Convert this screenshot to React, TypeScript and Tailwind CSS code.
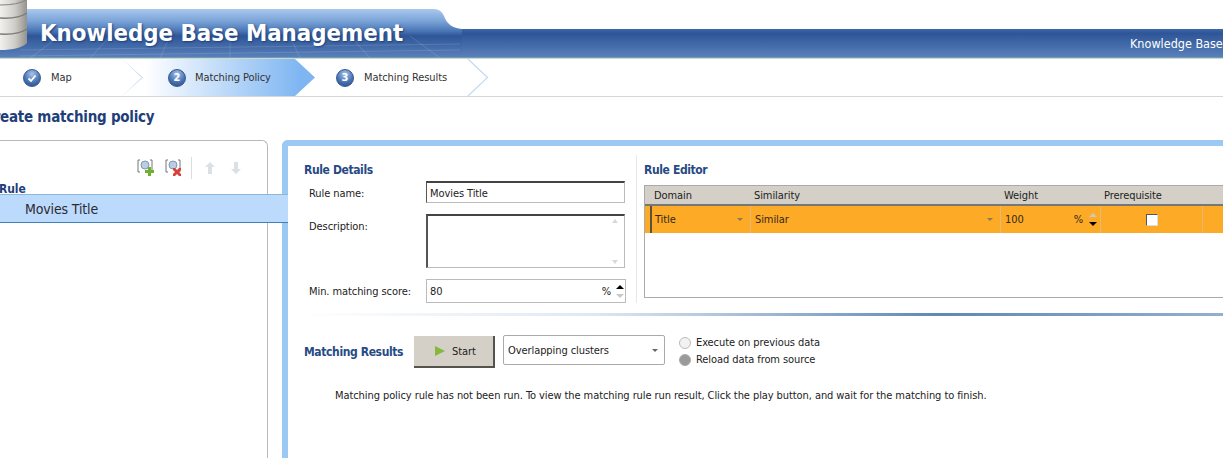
import React from "react";

const Chevron = ({ className }: { className: string }) => (
  <svg className={className} width="22" height="37" viewBox="0 0 22 37" fill="none">
    <path d="M1 0 L20.5 18.5 L1 37" stroke="#c4d9f3" strokeWidth="1.2" />
  </svg>
);

const StepBall = ({ children }: { children: React.ReactNode }) => (
  <span className="flex h-[18px] w-[18px] shrink-0 items-center justify-center rounded-full border border-[#34598f] bg-[radial-gradient(circle_at_50%_25%,#a9c3e8,#4b76b5_55%,#21467f)] text-[11px] font-bold leading-none text-white">
    {children}
  </span>
);

const Banner = () => (
  <div className="relative h-[59px] w-full overflow-hidden">
    {/* tab + bar shape, with the faint grid on it */}
    <svg className="absolute left-0 top-0" width="1223" height="59" viewBox="0 0 1223 59">
      <defs>
        <linearGradient id="bar" gradientUnits="userSpaceOnUse" x1="0" y1="29" x2="0" y2="58">
          <stop offset="0" stopColor="#3d68aa" />
          <stop offset="0.15" stopColor="#2e5597" />
          <stop offset="1" stopColor="#5b82bb" />
        </linearGradient>
        <linearGradient id="tab" gradientUnits="userSpaceOnUse" x1="0" y1="9" x2="0" y2="58">
          <stop offset="0" stopColor="#a9c8ec" />
          <stop offset="0.25" stopColor="#7aa3d8" />
          <stop offset="0.45" stopColor="#4a75b4" />
          <stop offset="0.55" stopColor="#2e5597" />
          <stop offset="1" stopColor="#5b82bb" />
        </linearGradient>
      </defs>
      <path d="M0 29H1223V58H0Z" fill="url(#bar)" />
      <path d="M0 9H434Q441 9 444 16Q448 28 462 29V58H0Z" fill="url(#tab)" />
      <g stroke="#ffffff" strokeOpacity="0.13" strokeWidth="1" fill="none">
        <path d="M20 50L460 44M20 56L460 50M60 36L30 58M110 36L90 58M170 36L160 58M230 36L230 58M290 36L300 58M350 36L370 58M410 36L440 58" />
      </g>
      <path d="M0 58H1223" stroke="#8fb5a8" strokeWidth="1" />
    </svg>
    {/* database drum */}
    <svg className="absolute left-0 top-0" width="28" height="52" viewBox="0 0 28 52">
      <defs>
        <linearGradient id="drum" x1="0" y1="0" x2="1" y2="0">
          <stop offset="0" stopColor="#f2f1ee" />
          <stop offset="0.55" stopColor="#cfcdc8" />
          <stop offset="1" stopColor="#94928d" />
        </linearGradient>
      </defs>
      <path d="M0 0H27V43Q20 50 0 50Z" fill="url(#drum)" />
      <path d="M0 18Q18 19 27 13M0 34Q18 35 27 29" stroke="#7d7c78" strokeWidth="1.5" fill="none" />
      <path d="M0 5Q18 5 26 0" stroke="#85847f" strokeWidth="1" fill="none" />
    </svg>
    <div className="relative flex h-full items-start justify-between pl-[40px]">
      <h1 className="mt-[17px] whitespace-nowrap text-[23.75px] font-bold leading-[32px] tracking-normal text-white [text-shadow:1px_1px_2px_#1d3f78]">
        Knowledge Base Management
      </h1>
      <span className="mt-[36px] w-[93px] whitespace-nowrap text-[12.5px] leading-[15px] tracking-normal text-white">Knowledge Base</span>
    </div>
  </div>
);

const Steps = () => (
  <div className="flex h-[38px] w-full border-b border-[#d6d6d6] text-[11px] text-[#333]">
    <div className="relative flex w-[122px] items-center pl-[23px]">
      <StepBall>
        <svg width="10" height="10" viewBox="0 0 10 10" fill="none">
          <path d="M1.5 5.5L4 8L8.5 2.5" stroke="#fff" strokeWidth="1.8" />
        </svg>
      </StepBall>
      <span className="ml-[10px] mt-[2px]">Map</span>
      <Chevron className="absolute left-full top-0" />
    </div>
    <div className="flex h-[37px] w-[193px] items-center bg-[linear-gradient(90deg,#ffffff_12%,#7fb6f2_92%)] pl-[46px] [clip-path:polygon(0_0,173px_0,100%_50%,173px_100%,0_100%,21px_50%)]">
      <StepBall>2</StepBall>
      <span className="ml-[9px] mt-[2px]">Matching Policy</span>
    </div>
    <div className="relative flex w-[152px] items-center pl-[21px]">
      <StepBall>3</StepBall>
      <span className="ml-[10px] mt-[2px]">Matching Results</span>
      <Chevron className="absolute left-full top-0" />
    </div>
  </div>
);

const IconRuleBtn = ({ kind }: { kind: "add" | "del" }) => (
  <svg width="17" height="18" viewBox="0 0 17 18" fill="none">
    <path d="M3 1H1V13H3M13 1H15V13H13" stroke="#777" strokeWidth="1" />
    <circle cx="8" cy="6" r="4" fill="#b9cde3" stroke="#8098b5" />
    {kind === "add" ? (
      <path d="M11 8H14V11H17V14H14V17H11V14H8V11H11Z" fill="#6fb02f" />
    ) : (
      <path d="M8 9L10 9L12 11L14 9L16 9L16 11L14 13L16 15L16 17L14 17L12 15L10 17L8 17L8 15L10 13L8 11Z" fill="#d8403a" />
    )}
  </svg>
);

const GreyArrow = ({ down }: { down?: boolean }) => (
  <svg width="10" height="12" viewBox="0 0 10 12" className={down ? "rotate-180" : ""}>
    <path d="M5 0L10 5H7V12H3V5H0Z" fill="#dcdfe4" />
  </svg>
);

const Spinner = ({ upDim, downDim }: { upDim?: boolean; downDim?: boolean }) => (
  <span className="flex flex-col items-center gap-[5px]">
    <span className={`h-0 w-0 border-x-[4px] border-b-[4px] border-x-transparent ${upDim ? "border-b-[#c8c8c8]" : "border-b-black"}`} />
    <span className={`h-0 w-0 border-x-[4px] border-t-[4px] border-x-transparent ${downDim ? "border-t-[#c8c8c8]" : "border-t-black"}`} />
  </span>
);

const Caret = () => <span className="h-0 w-0 border-x-[3px] border-t-[3px] border-x-transparent border-t-[#8a7a5a]" />;

const LeftPanel = () => (
  <div className="relative z-10 h-[330px] w-[268px] shrink-0 rounded-tr-md border-r border-t border-[#b8b8b8] pt-[17px]">
    <div className="flex h-[20px] items-center pl-[137px]">
      <IconRuleBtn kind="add" />
      <span className="ml-[11px]">
        <IconRuleBtn kind="del" />
      </span>
      <span className="ml-[9px] h-[22px] w-px bg-[#dddddd]" />
      <span className="ml-[13px]">
        <GreyArrow />
      </span>
      <span className="ml-[16px]">
        <GreyArrow down />
      </span>
    </div>
    <div className="-ml-px mt-[4px] h-[12px] text-[12px] font-bold leading-[14px] text-[#1f3f7a]">Rule</div>
    <div className="flex h-[29px] w-[288px] items-center border-y border-b-[#3f80b8] border-t-[#8ab8dc] bg-[#bcdafc] pl-[25px] pt-[1px] text-[14px] tracking-[-0.15px] text-[#2b2b33]">
      Movies Title
    </div>
  </div>
);

const SectionTitle = ({ className, children }: { className: string; children: React.ReactNode }) => (
  <h3 className={`text-[12px] font-bold leading-[16px] tracking-[-0.38px] text-[#274a85] ${className}`}>{children}</h3>
);

const RuleDetails = () => (
  <div className="w-[348px] shrink-0 pl-[16px]">
    <SectionTitle className="h-[19px]">Rule Details</SectionTitle>
    <div className="flex h-[33px] items-start">
      <label className="ml-[5px] w-[117px] pt-[6px] leading-[14px]">Rule name:</label>
      <div className="h-[22px] w-[199px] border border-[#bbb] border-l-[#555] border-t-2 border-t-[#444] pl-[3px] leading-[22px]">Movies Title</div>
    </div>
    <div className="flex h-[65px] items-start">
      <label className="ml-[5px] w-[117px] pt-[6px] leading-[14px]">Description:</label>
      <div className="flex h-[54px] w-[199px] flex-col items-end justify-between border border-[#bbb] border-l-2 border-l-[#555] border-t-2 border-t-[#444] px-[6px] py-[3px]">
        <span className="h-0 w-0 border-x-[3px] border-b-[4px] border-x-transparent border-b-[#d8d8d8]" />
        <span className="h-0 w-0 border-x-[3px] border-t-[4px] border-x-transparent border-t-[#d8d8d8]" />
      </div>
    </div>
    <div className="flex h-[24px] items-center">
      <label className="ml-[5px] w-[117px] pt-[2px] leading-[14px]">Min. matching score:</label>
      <div className="flex h-[24px] w-[200px] items-center border border-[#bbb] pl-[3px] pr-[1px]">
        <span className="mt-[2px] flex-1">80</span>
        <span className="mr-[5px] mt-[2px]">%</span>
        <Spinner downDim />
      </div>
    </div>
  </div>
);

const RuleEditor = () => (
  <div className="-mt-[7px] h-[148px] flex-1 border-l border-[#e8e8e8] pl-[7px] pt-[7px]">
    <SectionTitle className="h-[23px]">Rule Editor</SectionTitle>
    <div className="h-[113px] border border-[#aaa]">
      <div className="grid h-[20px] grid-cols-[105px_250px_100px_102px_1fr] border-b-2 border-[#777] bg-[#d4d0c8] leading-[19px]">
        <span className="pl-[9px]">Domain</span>
        <span className="pl-[4px]">Similarity</span>
        <span className="pl-[4px]">Weight</span>
        <span className="pl-[4px]">Prerequisite</span>
        <span />
      </div>
      <div className="grid h-[27px] grid-cols-[105px_250px_100px_102px_1fr] bg-[#fdaa26] text-[#33291a]">
        <span className="ml-[5px] flex items-center justify-between border-l-2 border-[#5a5040] pl-[3px] pr-[7px]">
          <span className="mt-[2px]">Title</span>
          <Caret />
        </span>
        <span className="flex items-center justify-between border-l border-[#e8b878] pl-[4px] pr-[7px]">
          <span className="mt-[2px]">Similar</span>
          <Caret />
        </span>
        <span className="flex items-center border-l border-[#e8b878] pl-[4px] pr-[3px]">
          <span className="mt-[2px] flex-1">100</span>
          <span className="mr-[6px] mt-[2px]">%</span>
          <Spinner upDim />
        </span>
        <span className="flex items-center justify-center border-l border-[#e8b878]">
          <span className="h-[12px] w-[12px] border border-[#555] border-b-[#ddd] border-r-[#ddd] bg-white" />
        </span>
        <span className="border-l border-[#e8b878]" />
      </div>
    </div>
  </div>
);

const MatchingResults = () => (
  <div className="pl-[16px]">
    <div className="flex items-center">
      <SectionTitle className="w-[110px]">Matching Results</SectionTitle>
      <button className="flex h-[32px] w-[81px] items-center gap-[7px] border-b-2 border-r-2 border-[#55534e] bg-[#d4d0c8] pl-[21px]">
        <span className="h-0 w-0 border-y-[5px] border-l-[10px] border-y-transparent border-l-[#86b83c]" />
        <span className="mt-[2px]">Start</span>
      </button>
      <div className="-mt-[1px] ml-[8px] flex h-[30px] w-[162px] items-center justify-between self-start rounded-[2px] border border-[#aaa] pl-[4px] pr-[6px]">
        <span className="mt-[2px]">Overlapping clusters</span>
        <span className="h-0 w-0 border-x-[3px] border-t-[3px] border-x-transparent border-t-[#666]" />
      </div>
      <div className="mb-[2px] ml-[14px] flex flex-col gap-[4px] leading-[13px]">
        <div className="flex items-center gap-[5px]">
          <span className="h-[12px] w-[12px] rounded-full border border-[#bbb] bg-[#f2f2f2]" />
          Execute on previous data
        </div>
        <div className="flex items-center gap-[5px]">
          <span className="h-[12px] w-[12px] rounded-full border border-[#aaa] bg-[#9a9a9a]" />
          Reload data from source
        </div>
      </div>
    </div>
    <p className="mt-[21px] pl-[31px] leading-[14px]">
      Matching policy rule has not been run. To view the matching rule run result, Click the play button, and wait for the matching to finish.
    </p>
  </div>
);

const App = () => {
  return (
    <div className="h-[458px] w-[1223px] overflow-hidden bg-white font-['DejaVu_Sans_Condensed','DejaVu_Sans',sans-serif] text-[11px] tracking-[-0.08px] text-[#222]">
      <Banner />
      <Steps />
      <h2 className="-ml-[16px] mt-[10px] h-[33px] whitespace-nowrap text-[15px] font-bold leading-[20px] tracking-[-0.25px] text-[#1f3f7a]">Create matching policy</h2>
      <div className="flex">
        <LeftPanel />
        <div className="ml-[14px] h-[330px] w-[1000px] shrink-0 rounded-tl-md border-l-[6px] border-t-[6px] border-[#9cc8f4]">
          <div className="h-full rounded-tl-lg bg-white pt-[16px]">
            <div className="flex h-[148px]">
              <RuleDetails />
              <RuleEditor />
            </div>
            <div className="ml-[10px] mt-[3px] h-[3px] bg-[linear-gradient(90deg,#ffffff,#dfe8f1_30%,#5f88b5_65%,#9fb8d2)]" />
            <div className="mt-[20px]">
              <MatchingResults />
            </div>
          </div>
        </div>
      </div>
    </div>
  );
};

export default App;
